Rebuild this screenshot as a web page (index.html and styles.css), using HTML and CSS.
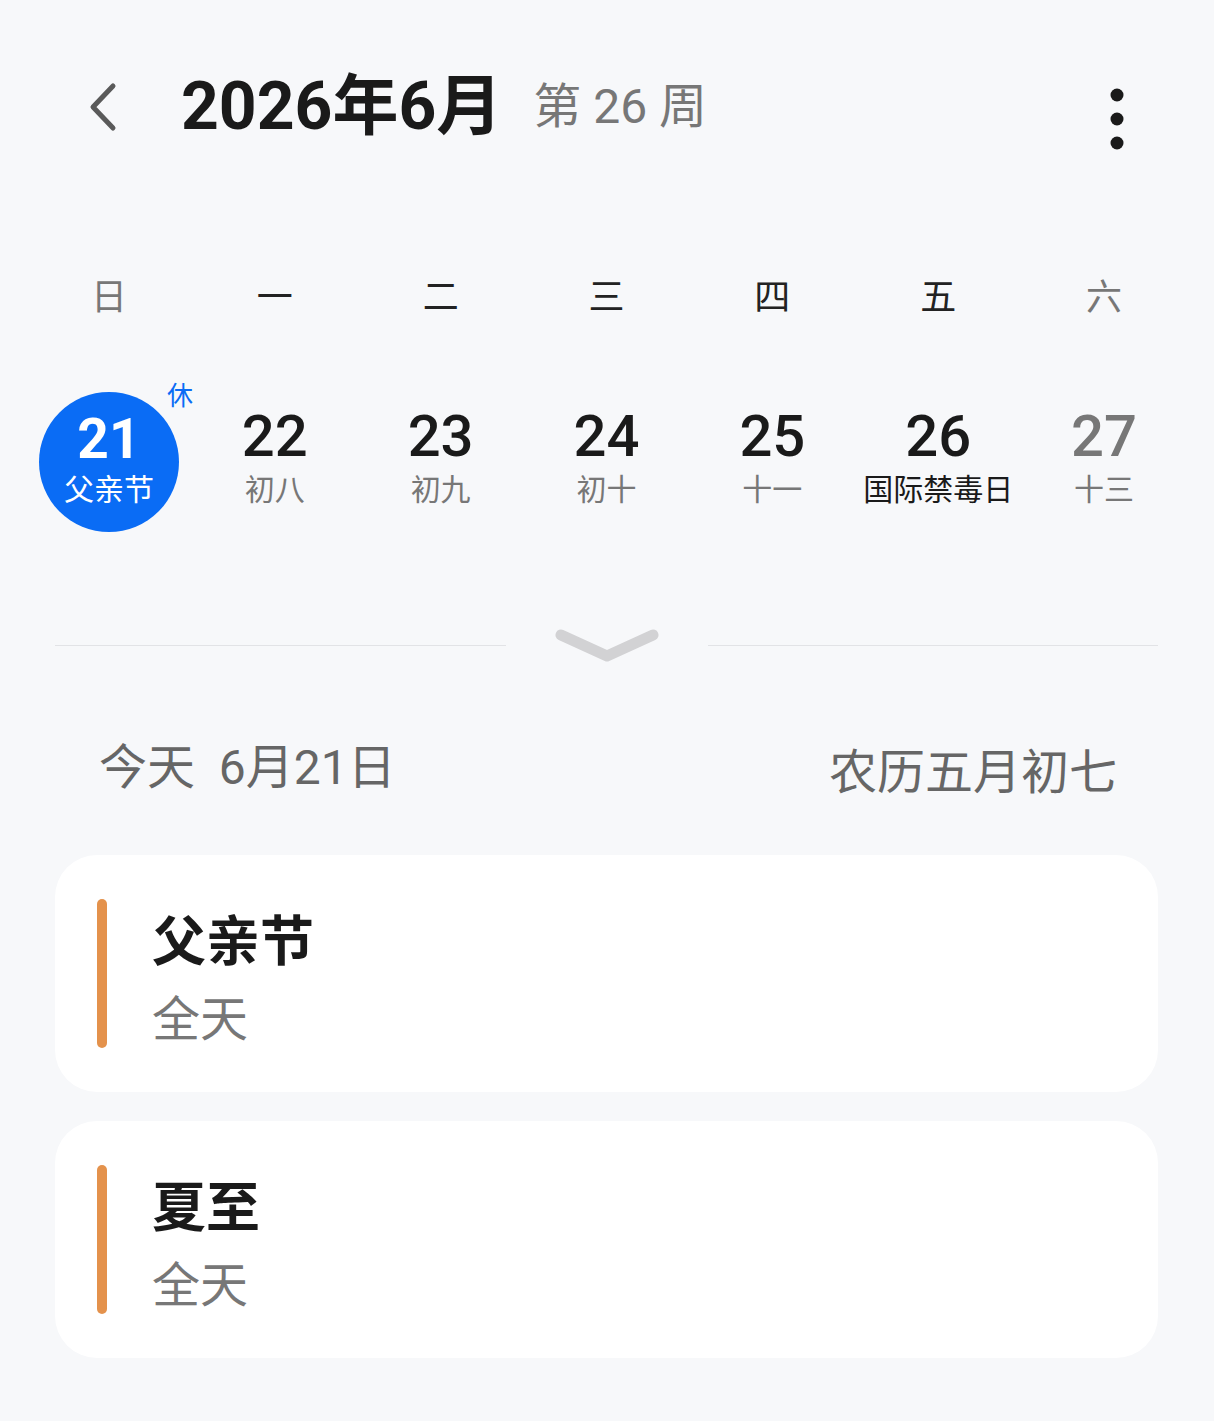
FILE: index.html
```html
<!DOCTYPE html>
<html lang="zh-CN">
<head>
<meta charset="utf-8">
<link rel="stylesheet" href="styles.css">
</head>
<body>
<div class="page">
  <header class="top">
    <svg class="back" width="40" height="56" viewBox="0 0 40 56"><path d="M30 7 L10 28 L30 49" fill="none" stroke="#5a5a5a" stroke-width="5" stroke-linecap="round" stroke-linejoin="round"/></svg>
    <h1 class="title">2026年6月</h1>
    <span class="week">第 26 周</span>
    <svg class="more" width="20" height="70" viewBox="0 0 20 70"><circle cx="10" cy="11" r="6.5" fill="#1a1a1a"/><circle cx="10" cy="35" r="6.5" fill="#1a1a1a"/><circle cx="10" cy="59" r="6.5" fill="#1a1a1a"/></svg>
  </header>

  <div class="weekdays">
    <span class="wd off">日</span>
    <span class="wd">一</span>
    <span class="wd">二</span>
    <span class="wd">三</span>
    <span class="wd">四</span>
    <span class="wd">五</span>
    <span class="wd off">六</span>
  </div>

  <div class="dates">
    <div class="day today">
      <div class="circle">
        <span class="num">21</span>
        <span class="lunar">父亲节</span>
      </div>
      <span class="rest">休</span>
    </div>
    <div class="day"><span class="num">22</span><span class="lunar">初八</span></div>
    <div class="day"><span class="num">23</span><span class="lunar">初九</span></div>
    <div class="day"><span class="num">24</span><span class="lunar">初十</span></div>
    <div class="day"><span class="num">25</span><span class="lunar">十一</span></div>
    <div class="day"><span class="num">26</span><span class="lunar fest">国际禁毒日</span></div>
    <div class="day off"><span class="num">27</span><span class="lunar">十三</span></div>
  </div>

  <div class="expander">
    <span class="line"></span>
    <svg class="chev" width="104" height="36" viewBox="0 0 104 36"><path d="M6 8 L52 29 L98 8" fill="none" stroke="#d2d2d4" stroke-width="11" stroke-linecap="round" stroke-linejoin="round"/></svg>
    <span class="line"></span>
  </div>

  <div class="today-row">
    <span>今天&nbsp;&nbsp;6月21日</span>
    <span>农历五月初七</span>
  </div>

  <div class="card">
    <span class="bar"></span>
    <div class="info">
      <div class="ev-title">父亲节</div>
      <div class="ev-sub">全天</div>
    </div>
  </div>
  <div class="card">
    <span class="bar"></span>
    <div class="info">
      <div class="ev-title">夏至</div>
      <div class="ev-sub">全天</div>
    </div>
  </div>
</div>
</body>
</html>
```

FILE: styles.css
```css
* { box-sizing: border-box; }
html, body { margin: 0; padding: 0; }
body {
  background: #f7f8fa;
  font-family: Roboto, "Noto Sans CJK SC", sans-serif;
  color: #1a1a1a;
  width: 1214px;
  height: 1421px;
  overflow: hidden;
}
.page { padding: 0 56px 0 55px; }

.top {
  display: flex;
  align-items: center;
  height: 110px;
  margin-top: 52px;
  padding-left: 28px;
}
.back { display: block; margin-right: 58px; }
.title {
  margin: 0;
  font-size: 66px;
  font-weight: 700;
  letter-spacing: 0;
  color: #1a1a1a;
  line-height: 1;
}
.week {
  margin-left: 31px;
  font-size: 48px;
  color: #777;
  line-height: 1;
}
.more { margin-left: auto; margin-right: 31px; margin-top: 24px; }

.weekdays {
  display: grid;
  grid-template-columns: repeat(7, 1fr);
  margin: 0 -29px;
  padding-top: 107px;
}
.wd {
  text-align: center;
  font-size: 36px;
  line-height: 50px;
  color: #222;
  font-family: "Noto Sans CJK SC", sans-serif;
}
.wd.off { color: #777; }

.dates {
  display: grid;
  grid-template-columns: repeat(7, 1fr);
  margin: 0 -29px;
  padding-top: 73px;
}
.day {
  position: relative;
  display: flex;
  flex-direction: column;
  align-items: center;
  height: 140px;
  padding-top: 10px;
}
.num {
  font-size: 58px;
  font-weight: 500;
  line-height: 68px;
  color: #1a1a1a;
}
.lunar {
  font-size: 30px;
  line-height: 34px;
  color: #777;
  font-family: "Noto Sans CJK SC", sans-serif;
}
.lunar.fest { color: #1a1a1a; white-space: nowrap; }
.day.off .num { color: #777; }

.today { padding-top: 0; }
.circle {
  width: 140px;
  height: 140px;
  border-radius: 50%;
  background: #0a6cf5;
  display: flex;
  flex-direction: column;
  align-items: center;
  justify-content: center;
  padding-bottom: 10px;
}
.circle .num { color: #fff; font-size: 55px; font-weight: 700; line-height: 60px; }
.circle .lunar { color: #fff; font-size: 30px; line-height: 36px; }
.rest {
  position: absolute;
  left: 141px;
  top: -17px;
  font-size: 26px;
  color: #0a6cf5;
  font-family: "Noto Sans CJK SC", sans-serif;
}

.expander {
  display: flex;
  align-items: center;
  margin-top: 95px;
  height: 36px;
}
.line { flex: 1; height: 1px; background: #e2e3e6; }
.chev { margin: 0 49px; display: block; }

.today-row {
  display: flex;
  justify-content: space-between;
  padding: 0 41px 0 44px;
  margin-top: 75px;
  font-size: 48px;
  line-height: 60px;
  color: #666;
  font-family: "Noto Sans CJK SC", sans-serif;
}
.today-row span:first-child { font-family: Roboto, "Noto Sans CJK SC", sans-serif; }

.card {
  display: flex;
  background: #fff;
  border-radius: 42px;
  height: 237px;
  padding: 44px 42px;
  margin-top: 57px;
}
.card + .card { margin-top: 29px; }
.bar {
  width: 10px;
  border-radius: 5px;
  background: #e4924c;
  flex: none;
}
.info {
  margin-left: 45px;
  display: flex;
  flex-direction: column;
  font-family: "Noto Sans CJK SC", sans-serif;
}
.ev-title {
  font-size: 54px;
  font-weight: 700;
  line-height: 72px;
  color: #1a1a1a;
  margin-top: 3px;
}
.ev-sub {
  font-size: 48px;
  line-height: 60px;
  color: #777;
  margin-top: 11px;
}
```
